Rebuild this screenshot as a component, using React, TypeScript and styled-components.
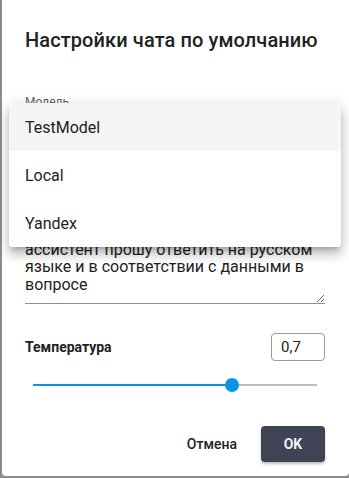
import React, { useState } from 'react'
import styled, { createGlobalStyle } from 'styled-components'

const Global = createGlobalStyle`
    html, body {
        margin: 0;
        padding: 0;
        background-color: #8c8c8c;
        font-family: Roboto, "Liberation Sans", sans-serif;
    }
`

const models = ["TestModel", "Local", "Yandex"]

const promptText =
    "Ты полезный и вежливый\nассистент, который отвечает кратко.\nЕсли вопрос задан по-русски, ты как\nассистент прошу ответить на русском\nязыке и в соответствии с данными в\nвопросе"

const App = () => {
    const [model, setModel] = useState("TestModel")
    const [prompt, setPrompt] = useState(promptText)
    const [temp, setTemp] = useState(0.7)

    return (
        <Page>
            <Global />
            <Dialog>
                <Title>Настройки чата по умолчанию</Title>

                <Field>
                    <Label>Модель</Label>
                    <SelectBox>{model}</SelectBox>
                </Field>

                <PromptField>
                    <Prompt
                        aria-label="Системный промпт"
                        value={prompt}
                        rows={6}
                        onChange={(e) => setPrompt(e.target.value)}
                    />
                </PromptField>

                <TempRow>
                    <TempLabel>Температура</TempLabel>
                    <TempInput value={String(temp).replace(".", ",")} readOnly />
                </TempRow>

                <Slider onClick={() => setTemp(temp)}>
                    <Track />
                    <Filled style={{ width: `${temp * 100}%` }} />
                    <Thumb style={{ left: `${temp * 100}%` }} />
                </Slider>

                <Actions>
                    <TextButton>Отмена</TextButton>
                    <OkButton>OK</OkButton>
                </Actions>

                <Menu>
                    {models.map((m) => (
                        <MenuItem key={m} $active={m === model} onClick={() => setModel(m)}>
                            {m}
                        </MenuItem>
                    ))}
                </Menu>
            </Dialog>
        </Page>
    )
}

export default App

const Page = styled.div`
    width: 349px;
    height: 478px;
    padding: 0 0 2px 2px;
    box-sizing: border-box;
    overflow: hidden;
`

const Dialog = styled.div`
    position: relative;
    width: 347px;
    height: 476px;
    box-sizing: border-box;
    background-color: #fff;
    border-radius: 0 0 4px 4px;
    padding: 24px 24px 0 23px;
    display: flex;
    flex-direction: column;
    color: #212121;
`

const Title = styled.h2`
    margin: 0;
    font-size: 20px;
    line-height: 32px;
    font-weight: 500;
    letter-spacing: 0.1px;
    color: #222;
`

const Field = styled.div`
    margin-top: 38px;
    display: flex;
    flex-direction: column;
`

const Label = styled.div`
    font-size: 12px;
    line-height: 16px;
    color: #666;
`

const SelectBox = styled.div`
    height: 32px;
    line-height: 32px;
    font-size: 16px;
    border-bottom: 1px solid #949494;
`

const PromptField = styled.div`
    margin-top: 45px;
    display: flex;
    flex-direction: column;
`

const Prompt = styled.textarea`
    margin: 0;
    padding: 0 0 4px;
    border: none;
    border-bottom: 1px solid #8f8f8f;
    outline: none;
    resize: vertical;
    font-family: Roboto, "Liberation Sans", sans-serif;
    font-size: 16px;
    line-height: 17.6px;
    color: #222;
    height: 111px;
    overflow: hidden;
    background: transparent;
`

const TempRow = styled.div`
    margin-top: 29px;
    display: flex;
    align-items: center;
    justify-content: space-between;
`

const TempLabel = styled.div`
    font-size: 14px;
    font-weight: 700;
    color: #222;
`

const TempInput = styled.input`
    width: 54px;
    height: 28px;
    box-sizing: border-box;
    border: 1px solid #9a9a9a;
    border-radius: 4px;
    padding: 0 9px;
    font-family: Roboto, "Liberation Sans", sans-serif;
    font-size: 15px;
    color: #222;
    outline: none;
`

const Slider = styled.div`
    position: relative;
    height: 2px;
    margin: 23px 8px 0;
`

const Track = styled.div`
    height: 2px;
    background-color: #bdbdbd;
`

const Filled = styled.div`
    position: absolute;
    left: 0;
    top: 0;
    height: 2px;
    background-color: #0a95e4;
`

const Thumb = styled.div`
    position: absolute;
    top: 1px;
    width: 14px;
    height: 14px;
    border-radius: 50%;
    background-color: #0a95e4;
    transform: translate(-50%, -50%);
`

const Actions = styled.div`
    margin-top: 40px;
    display: flex;
    justify-content: flex-end;
    align-items: center;
    gap: 16px;
`

const TextButton = styled.button`
    height: 36px;
    padding: 0 8px;
    border: none;
    background: transparent;
    font-family: Roboto, "Liberation Sans", sans-serif;
    font-size: 14px;
    font-weight: 500;
    color: #222;
    cursor: pointer;
`

const OkButton = styled.button`
    width: 64px;
    height: 36px;
    border: none;
    border-radius: 4px;
    background-color: #3e4355;
    color: #f2f2f2;
    font-family: Roboto, "Liberation Sans", sans-serif;
    font-size: 14px;
    font-weight: 700;
    box-shadow: 0 2px 3px rgba(0, 0, 0, 0.25);
    cursor: pointer;
`

const Menu = styled.div`
    position: absolute;
    top: 103px;
    left: 7px;
    width: 332px;
    background-color: #fff;
    border-radius: 4px;
    overflow: hidden;
    box-shadow: 0 5px 5px -3px rgba(0, 0, 0, 0.2), 0 8px 10px 1px rgba(0, 0, 0, 0.14),
        0 3px 14px 2px rgba(0, 0, 0, 0.12);
`

const MenuItem = styled.div<{ $active?: boolean }>`
    height: 48px;
    display: flex;
    align-items: center;
    padding-left: 16px;
    font-size: 16px;
    color: #222;
    background-color: ${(p) => (p.$active ? "#f5f5f5" : "#fff")};
    cursor: pointer;
`
